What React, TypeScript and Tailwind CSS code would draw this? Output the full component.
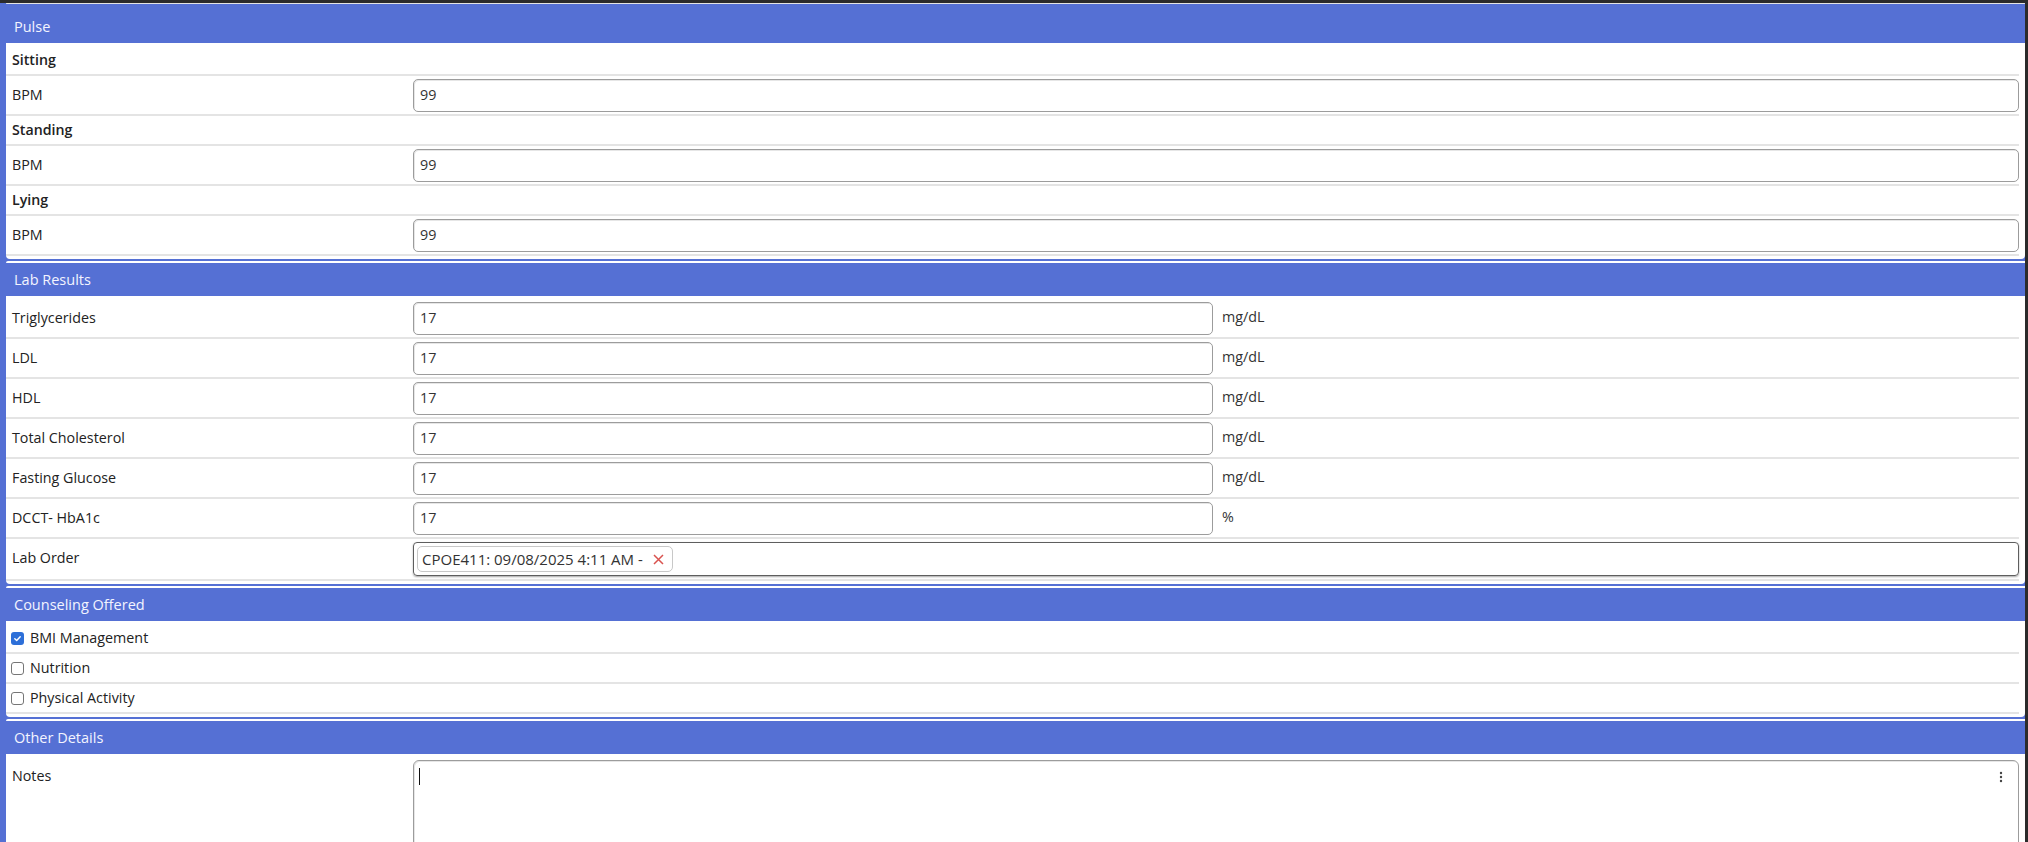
import React from "react";

const FONT = { fontFamily: '"Open Sans", "Noto Sans", sans-serif' };

function Header({ title }: { title: string }) {
  return (
    <div className="h-[33px] flex items-center pl-[8px] rounded-tr-[9px] bg-[#5570d4] text-[14.5px] text-[#f3f4ff]">
      {title}
    </div>
  );
}

function Section({ title, children }: { title: string; children: React.ReactNode }) {
  return (
    <div className="mt-[2px]">
      <div className="h-[2px] bg-white rounded-tl-[3px]" />
      <Header title={title} />
      <div className="bg-white pt-[3px] pb-[3px] pr-[6px] rounded-b-[4px]">{children}</div>
    </div>
  );
}

function LabelRow({ label }: { label: string }) {
  return (
    <div className="h-[30px] flex items-center pl-[6px] border-b-2 border-[#e4e4e4] font-semibold text-[14.2px] text-[#222]">
      {label}
    </div>
  );
}

function InputRow({ label, value, unit, full }: { label: string; value: string; unit?: string; full?: boolean }) {
  return (
    <div className="h-[40px] grid grid-cols-[407px_1fr] items-center border-b-2 border-[#e4e4e4] text-[14.3px] text-[#222]">
      <div className="pl-[6px]">{label}</div>
      <div className="flex items-center">
        <div
          className={
            (full ? "flex-1" : "w-[800px]") +
            " h-[33px] flex items-center pl-[6px] border border-[#9c9c9c] rounded-[5px] shadow-[inset_1px_1px_0_#e6e6e6] text-[#333]"
          }
        >
          {value}
        </div>
        {unit && <div className="ml-[9px] text-[#333] -mt-[3px]">{unit}</div>}
      </div>
    </div>
  );
}

function CheckRow({ label, checked }: { label: string; checked?: boolean }) {
  return (
    <div className="h-[30px] flex items-center pl-[5px] border-b-2 border-[#e4e4e4] text-[14.3px] text-[#222]">
      {checked ? (
        <span className="w-[13px] h-[13px] rounded-[3px] bg-[#2d6fd8] flex items-center justify-center">
          <svg width="9" height="9" viewBox="0 0 10 10">
            <path d="M2 5.2 L4.1 7.2 L8 3" stroke="white" strokeWidth="1.6" fill="none" strokeLinecap="round" strokeLinejoin="round" />
          </svg>
        </span>
      ) : (
        <span className="w-[13px] h-[13px] rounded-[3px] border border-[#767676] bg-white" />
      )}
      <span className="ml-[6px]">{label}</span>
    </div>
  );
}

export default function App() {
  return (
    <div className="w-[2028px] h-[842px] overflow-hidden bg-[#2b2b2b] pt-[3px] pr-[3px]" style={FONT}>
      <div className="h-full bg-[#5570d4] pl-[6px] flex flex-col">
        <div className="h-[3px] bg-white rounded-b-[3px] border-b border-[#e4e4e4]" />
        <div className="mt-[6px]">
          <Header title="Pulse" />
          <div className="bg-white pt-[3px] pb-[3px] pr-[6px] rounded-b-[4px]">
            <LabelRow label="Sitting" />
            <InputRow label="BPM" value="99" full />
            <LabelRow label="Standing" />
            <InputRow label="BPM" value="99" full />
            <LabelRow label="Lying" />
            <InputRow label="BPM" value="99" full />
          </div>
        </div>
        <Section title="Lab Results">
          <InputRow label="Triglycerides" value="17" unit="mg/dL" />
          <InputRow label="LDL" value="17" unit="mg/dL" />
          <InputRow label="HDL" value="17" unit="mg/dL" />
          <InputRow label="Total Cholesterol" value="17" unit="mg/dL" />
          <InputRow label="Fasting Glucose" value="17" unit="mg/dL" />
          <InputRow label="DCCT- HbA1c" value="17" unit="%" />
          <div className="h-[42px] grid grid-cols-[407px_1fr] items-center border-b-2 border-[#e4e4e4] text-[14.3px] text-[#222]">
            <div className="pl-[6px] -mt-[2px]">Lab Order</div>
            <div className="h-[34px] flex items-center pl-[3px] border border-[#5e5e5e] rounded-[4px] shadow-[0_1px_2px_rgba(0,0,0,0.35)]">
              <div className="h-[26px] flex items-center pl-[4px] pr-[8px] border border-[#c8c8c8] rounded-[5px] text-[15px] text-[#333]">
                <span>CPOE411: 09/08/2025 4:11 AM -</span>
                <svg className="ml-[10px]" width="11" height="11" viewBox="0 0 11 11">
                  <path d="M1 1 L10 10 M10 1 L1 10" stroke="#d9534f" strokeWidth="1.5" />
                </svg>
              </div>
            </div>
          </div>
        </Section>
        <Section title="Counseling Offered">
          <CheckRow label="BMI Management" checked />
          <CheckRow label="Nutrition" />
          <CheckRow label="Physical Activity" />
        </Section>
        <Section title="Other Details">
          <div className="grid grid-cols-[407px_1fr] text-[14.3px] text-[#222]">
            <div className="pl-[6px] pt-[8px]">Notes</div>
            <div className="relative mt-[3px] h-[120px] border border-[#9c9c9c] rounded-[6px] shadow-[inset_1px_1px_0_#e6e6e6]">
              <div className="absolute left-[5px] top-[7px] w-[1px] h-[17px] bg-[#111]" />
              <svg className="absolute right-[15px] top-[10px]" width="4" height="12" viewBox="0 0 4 12">
                <circle cx="2" cy="2" r="1.2" fill="#444" />
                <circle cx="2" cy="6" r="1.2" fill="#444" />
                <circle cx="2" cy="10" r="1.2" fill="#444" />
              </svg>
            </div>
          </div>
        </Section>
      </div>
    </div>
  );
}
